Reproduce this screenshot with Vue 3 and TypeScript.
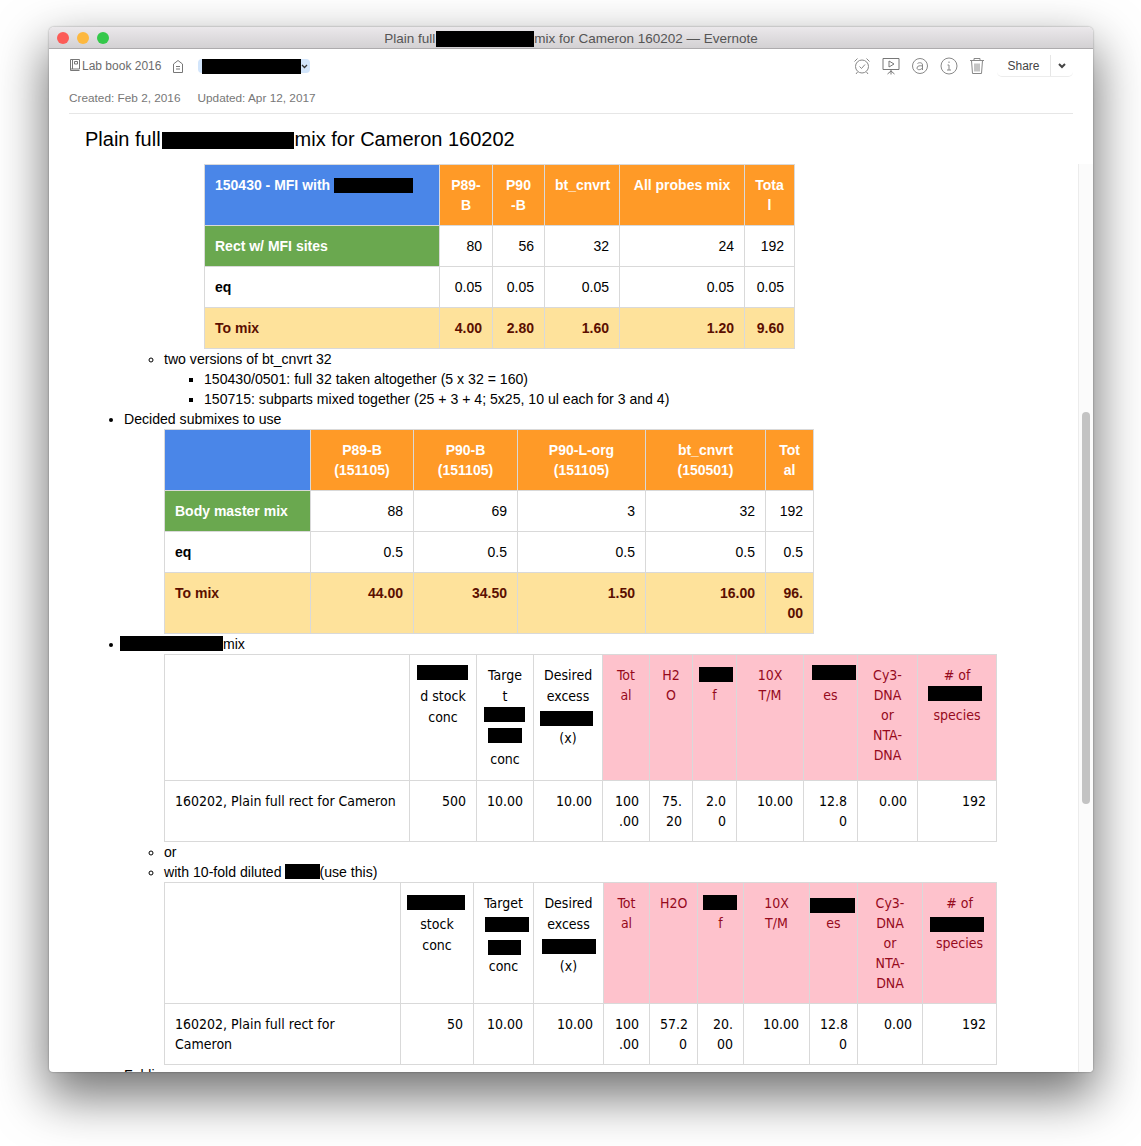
<script setup lang="ts">
// one entry of a cell line: text, or a blacked out box with width and drop from the line top
interface Black {
  w: number
  y?: number
  x?: number
}
type Part = string | Black
interface Cell {
  lines: Part[][]
  cls?: string
}
interface TableBlock {
  kind: 'table'
  cls: string
  indent: number
  cols: number[]
  rows: Cell[][]
}
interface ItemBlock {
  kind: 'item'
  level: number
  parts: Part[]
}

const cell = (cls: string, ...lines: (Part | Part[])[]): Cell => ({
  cls,
  lines: lines.map((l) => (Array.isArray(l) ? l : [l]))
})

const rowOf = (cls: string, vals: string[]) => vals.map((v) => cell(cls, ...v.split('|')))

const boxStyle = (b: Black) => ({
  width: b.w + 'px',
  marginTop: (b.y ?? 0) + 'px',
  marginLeft: (b.x ?? 0) + 'px'
})

const blocks: (TableBlock | ItemBlock)[] = [
  {
    kind: 'table',
    cls: 'sans',
    indent: 80,
    cols: [235, 53, 52, 75, 125, 50],
    rows: [
      [
        cell('blue', ['150430 - MFI with ', { w: 79, y: 3 }]),
        ...rowOf('orange', ['P89-|B', 'P90|-B', 'bt_cnvrt', 'All probes mix', 'Tota|l'])
      ],
      [cell('green', 'Rect w/ MFI sites'), ...rowOf('num', ['80', '56', '32', '24', '192'])],
      [cell('bold', 'eq'), ...rowOf('num', ['0.05', '0.05', '0.05', '0.05', '0.05'])],
      [cell('yellow', 'To mix'), ...rowOf('yellow num', ['4.00', '2.80', '1.60', '1.20', '9.60'])]
    ]
  },
  { kind: 'item', level: 2, parts: ['two versions of bt_cnvrt 32'] },
  { kind: 'item', level: 3, parts: ['150430/0501: full 32 taken altogether (5 x 32 = 160)'] },
  { kind: 'item', level: 3, parts: ['150715: subparts mixed together (25 + 3 + 4; 5x25, 10 ul each for 3 and 4)'] },
  { kind: 'item', level: 1, parts: ['Decided submixes to use'] },
  {
    kind: 'table',
    cls: 'sans',
    indent: 40,
    cols: [146, 103, 104, 128, 120, 48],
    rows: [
      [
        cell('blue', ''),
        ...rowOf('orange', ['P89-B|(151105)', 'P90-B|(151105)', 'P90-L-org|(151105)', 'bt_cnvrt|(150501)', 'Tot|al'])
      ],
      [cell('green', 'Body master mix'), ...rowOf('num', ['88', '69', '3', '32', '192'])],
      [cell('bold', 'eq'), ...rowOf('num', ['0.5', '0.5', '0.5', '0.5', '0.5'])],
      [cell('yellow', 'To mix'), ...rowOf('yellow num', ['44.00', '34.50', '1.50', '16.00', '96.|00'])]
    ]
  },
  { kind: 'item', level: 1, parts: [{ w: 103, y: 2, x: -4 }, 'mix'] },
  {
    kind: 'table',
    cls: 'humanist',
    indent: 40,
    cols: [245, 67, 57, 69, 47, 43, 44, 67, 54, 60, 79],
    rows: [
      [
        cell('head', ''),
        cell('head', { w: 51, x: -3 }, 'd stock', 'conc'),
        cell('head', 'Targe', 't', { w: 41, x: -3 }, { w: 34 }, 'conc'),
        cell('head', 'Desired', 'excess', { w: 53, y: 4, x: -4 }, '(x)'),
        cell('pink', 'Tot', 'al'),
        cell('pink', 'H2', 'O'),
        cell('pink', { w: 34, y: 2, x: -4 }, 'f'),
        cell('pink', '10X', 'T/M'),
        cell('pink', { w: 44, x: -2 }, 'es'),
        cell('pink', 'Cy3-', 'DNA', 'or', 'NTA-', 'DNA'),
        cell('pink', '# of', { w: 54, y: 1, x: -4 }, 'species')
      ],
      [
        cell('plain', '160202, Plain full rect for Cameron'),
        ...rowOf('num', ['500', '10.00', '10.00', '100|.00', '75.|20', '2.0|0', '10.00', '12.8|0', '0.00', '192'])
      ]
    ]
  },
  { kind: 'item', level: 2, parts: ['or'] },
  { kind: 'item', level: 2, parts: ['with 10-fold diluted', { w: 35, y: 2, x: 3 }, '(use this)'] },
  {
    kind: 'table',
    cls: 'humanist short',
    indent: 40,
    cols: [236, 73, 60, 70, 46, 48, 46, 66, 48, 65, 74],
    rows: [
      [
        cell('head', ''),
        cell('head', { w: 58, y: 2, x: -4 }, 'stock', 'conc'),
        cell('head', 'Target', { w: 44, y: 3, x: 1 }, { w: 33, y: 5, x: 2 }, 'conc'),
        cell('head', 'Desired', 'excess', { w: 54, y: 4, x: -2 }, '(x)'),
        cell('pink', 'Tot', 'al'),
        cell('pink', 'H2O'),
        cell('pink', { w: 34, y: 2, x: -5 }, 'f'),
        cell('pink', '10X', 'T/M'),
        cell('pink', { w: 46, y: 5, x: -11 }, 'es'),
        cell('pink', 'Cy3-', 'DNA', 'or', 'NTA-', 'DNA'),
        cell('pink', '# of', { w: 54, y: 4, x: -6 }, 'species')
      ],
      [
        cell('plain', '160202, Plain full rect for', 'Cameron'),
        ...rowOf('num', ['50', '10.00', '10.00', '100|.00', '57.2|0', '20.|00', '10.00', '12.8|0', '0.00', '192'])
      ]
    ]
  },
  { kind: 'item', level: 1, parts: ['Folding'] }
]
</script>

<template>
  <div class="page">
    <div class="window">
      <header class="titlebar">
        <div class="lights">
          <span class="light red"></span>
          <span class="light amber"></span>
          <span class="light lime"></span>
        </div>
        <div class="wintitle">Plain full<i class="wbox"></i>mix for Cameron 160202 — Evernote</div>
      </header>

      <div class="toolbar">
        <svg class="nb" width="12" height="14" viewBox="0 0 12 14" fill="none" stroke="#777" stroke-width="1">
          <path d="M1.500 11V1.500h9v9.500zM1.500 11v1.500h9M3.500 1.500V11M5.500 3.500h3v2.500h-3z" />
        </svg>
        <span class="nbname">Lab book 2016</span>
        <svg class="tag" width="12" height="15" viewBox="0 0 12 15" fill="none" stroke="#777" stroke-width="1">
          <path d="M1.500 5L6 1.500 10.500 5v8.500h-9zM4 7.500h4M4 10h4" />
        </svg>
        <div class="pill">
          <i class="pillbox"></i>
          <svg width="7" height="5" viewBox="0 0 7 5" fill="none" stroke="#333" stroke-width="1.300"><path d="M1 1l2.500 2.500L6 1" /></svg>
        </div>
        <div class="tools">
          <svg width="18" height="18" viewBox="0 0 18 18" fill="none" stroke="#888" stroke-width="1">
            <circle cx="9" cy="9.500" r="6.500" />
            <path d="M6.500 9.500l2 2 3.500-4M1.500 4.500L4.500 1.500M16.500 4.500L13.500 1.500M4.500 15L3 17M13.500 15L15 17" />
          </svg>
          <svg width="18" height="18" viewBox="0 0 18 18" fill="none" stroke="#777" stroke-width="1">
            <path d="M1 1.500h16v11H1zM7 4l5 3-5 3zM9 12.500v5M9 14l-3.500 3M9 14l3.500 3" />
          </svg>
          <svg width="18" height="18" viewBox="0 0 18 18" fill="none" stroke="#888" stroke-width="1">
            <circle cx="9" cy="9" r="7.500" />
            <path d="M6.500 6.500c1-1 5-1.500 5 1.500v5M11.500 9c-2-.5-5.500-.5-5.500 2 0 2.500 4 2 5.500 0" />
          </svg>
          <svg width="18" height="18" viewBox="0 0 18 18" fill="none" stroke="#888" stroke-width="1">
            <circle cx="9" cy="9" r="8" />
            <path d="M7.500 8h1.500v5M7 13h4M9 4.500v1.500" />
          </svg>
          <svg width="16" height="18" viewBox="0 0 16 18" fill="none" stroke="#888" stroke-width="1">
            <path d="M1 3.500h14M5 3.500V1.500h6v2M2.500 3.500l1 13h9l1-13M6 6.500v8M8 6.500v8M10 6.500v8" />
          </svg>
        </div>
        <div class="share">
          <span class="sharetext">Share</span>
          <span class="sharearrow">
            <svg width="8" height="6" viewBox="0 0 8 6" fill="none" stroke="#444" stroke-width="2"><path d="M1 1l3 3 3-3" /></svg>
          </span>
        </div>
      </div>

      <div class="dates">
        <span>Created: Feb 2, 2016</span>
        <span>Updated: Apr 12, 2017</span>
      </div>
      <h1 class="notetitle">Plain full<i class="hbox"></i>mix for Cameron 160202</h1>

      <div class="body">
        <div class="note">
          <template v-for="(b, i) in blocks" :key="i">
            <div v-if="b.kind === 'item'" class="item" :class="'lvl' + b.level">
              <template v-for="(p, k) in b.parts" :key="k">
                <template v-if="typeof p === 'string'">{{ p }}</template>
                <i v-else class="box" :style="boxStyle(p)"></i>
              </template>
            </div>
            <table v-else :class="b.cls" :style="{ marginLeft: b.indent + 'px' }">
              <colgroup>
                <col v-for="(w, k) in b.cols" :key="k" :style="{ width: w + 'px' }" />
              </colgroup>
              <tr v-for="(row, r) in b.rows" :key="r">
                <td v-for="(c, k) in row" :key="k" :class="c.cls">
                  <div v-for="(line, l) in c.lines" :key="l" class="line">
                    <template v-for="(p, m) in line" :key="m">
                      <template v-if="typeof p === 'string'">{{ p }}</template>
                      <i v-else class="box" :style="boxStyle(p)"></i>
                    </template>
                  </div>
                </td>
              </tr>
            </table>
          </template>
        </div>
        <div class="scrollbar"><div class="thumb"></div></div>
      </div>
    </div>
  </div>
</template>

<style>
html,
body {
  background: #fff;
}
</style>

<style scoped>
.page {
  height: 1146px;
  padding: 27px 0 0 49px;
  box-sizing: border-box;
  overflow: hidden;
}

.window {
  width: 1044px;
  height: 1045px;
  background: #fff;
  border-radius: 5px 5px 4px 4px;
  overflow: hidden;
  display: flex;
  flex-direction: column;
  box-shadow: 0 22px 50px 3px rgba(0, 0, 0, 0.55), 0 0 2px rgba(0, 0, 0, 0.4);
  font-family: 'Liberation Sans', Arial, sans-serif;
  color: #000;
}

.titlebar {
  height: 22px;
  flex: none;
  display: flex;
  align-items: center;
  position: relative;
  background: linear-gradient(#ebe8eb, #d3d1d3);
  border-bottom: 1px solid #adabad;
  box-sizing: border-box;
}

.lights {
  display: flex;
  gap: 8px;
  padding-left: 8px;
  position: absolute;
  left: 0;
}

.light {
  width: 12px;
  height: 12px;
  border-radius: 50%;
}

.red {
  background: #fc5b57;
}

.amber {
  background: #fdb83f;
}

.lime {
  background: #34c84a;
}

.wintitle {
  flex: 1;
  text-align: center;
  font-size: 13.500px;
  color: #555;
  padding-top: 3px;
}

.box,
.wbox,
.hbox,
.pillbox {
  display: inline-block;
  background: #000;
}

.box {
  height: 15px;
  vertical-align: top;
}

.wbox {
  width: 98px;
  height: 16px;
  vertical-align: middle;
  margin-left: 1px;
}

.toolbar {
  height: 34px;
  flex: none;
  display: flex;
  align-items: center;
  padding: 0 20px;
}

.nb {
  margin-right: 1px;
  margin-top: -3px;
}

.nbname {
  font-size: 12px;
  color: #6c6c6c;
}

.tag {
  margin-left: 11px;
}

.pill {
  margin-left: 14px;
  width: 112px;
  height: 14px;
  background: #d2e5fb;
  border-radius: 4px;
  display: flex;
  align-items: center;
  padding-left: 4px;
  box-sizing: border-box;
}

.pillbox {
  width: 99px;
  height: 15px;
  flex: none;
}

.tools {
  margin-left: auto;
  display: flex;
  align-items: center;
  gap: 11px;
}

.share {
  margin-left: 12px;
  width: 76px;
  height: 22px;
  display: flex;
  align-items: center;
  border-bottom: 1px solid #ececec;
  border-radius: 0 0 5px 5px;
  box-sizing: border-box;
}

.sharetext {
  flex: 1;
  text-align: center;
  font-size: 12px;
  color: #444;
}

.sharearrow {
  width: 22px;
  height: 21px;
  border-left: 1px solid #e6e6e6;
  display: flex;
  align-items: center;
  justify-content: center;
}

.dates {
  height: 31px;
  flex: none;
  margin: 0 20px;
  display: flex;
  align-items: center;
  gap: 17px;
  font-size: 11.800px;
  color: #777;
  border-bottom: 1px solid #e6e6e6;
  box-sizing: border-box;
}

.notetitle {
  height: 50px;
  flex: none;
  margin: 0;
  padding-left: 36px;
  font-size: 20px;
  line-height: 50px;
  font-weight: normal;
}

.hbox {
  width: 132px;
  height: 17px;
  vertical-align: middle;
  margin: 0 1px;
}

.body {
  flex: 1;
  min-height: 0;
  display: flex;
}

.note {
  flex: 1;
  min-width: 0;
  overflow: hidden;
  padding-left: 75px;
  font-size: 14.100px;
  line-height: 20px;
}

.scrollbar {
  width: 15px;
  flex: none;
  background: #fbfbfb;
  border-left: 1px solid #ececec;
  box-sizing: border-box;
}

.thumb {
  width: 8px;
  height: 392px;
  margin: 248px 0 0 3px;
  background: #c3c3c3;
  border-radius: 4px;
}

.item {
  display: list-item;
}

.lvl1 {
  list-style-type: disc;
}

.lvl2 {
  margin-left: 40px;
  list-style-type: circle;
}

.lvl3 {
  margin-left: 80px;
  list-style-type: square;
}

table {
  border-collapse: collapse;
  table-layout: fixed;
  width: min-content;
}

td {
  border: 1px solid #d9d9d9;
  padding: 10px;
  vertical-align: top;
  line-height: 20px;
  overflow: hidden;
  font-size: 14px;
}

.sans td {
  font-family: 'Liberation Sans', Arial, sans-serif;
}

.humanist td {
  font-family: 'DejaVu Sans Condensed', 'DejaVu Sans', sans-serif;
}

.line {
  min-height: 20px;
  white-space: nowrap;
}

.blue {
  background: #4a86e8;
  color: #fff;
  font-weight: bold;
}

.orange {
  background: #ff9a27;
  color: #fff;
  font-weight: bold;
  text-align: center;
}

.green {
  background: #6aa84f;
  color: #fff;
  font-weight: bold;
}

.yellow {
  background: #fee29b;
  color: #5b0f00;
  font-weight: bold;
}

.bold {
  font-weight: bold;
}

.num {
  text-align: right;
}

.head {
  text-align: center;
}

.head .line {
  line-height: 21px;
  min-height: 21px;
}

.pink {
  background: #fec2cc;
  color: #960a1c;
  text-align: center;
}
</style>
